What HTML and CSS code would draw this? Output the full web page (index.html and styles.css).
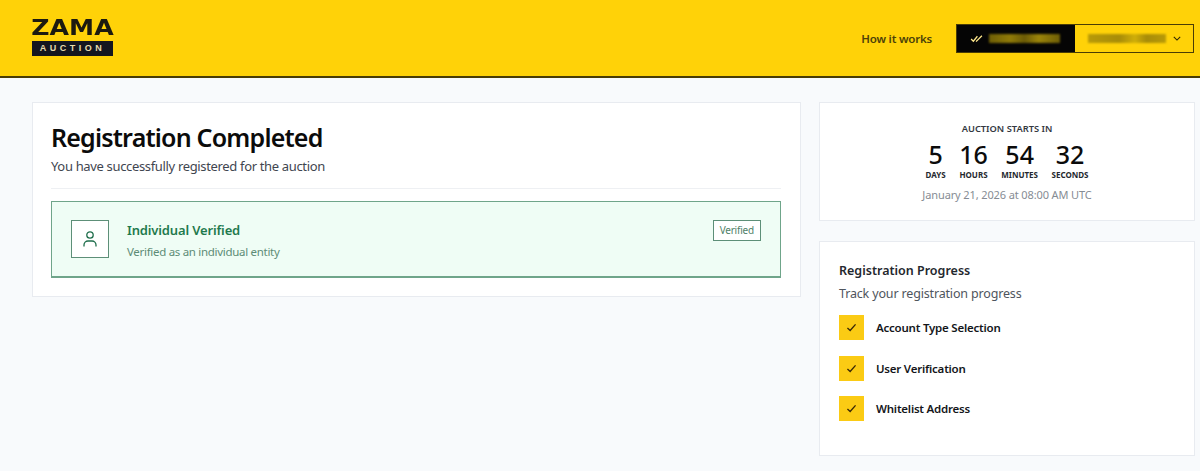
FILE: index.html
```html
<!DOCTYPE html>
<html lang="en">
<head>
  <meta charset="UTF-8" />
  <meta name="viewport" content="width=device-width, initial-scale=1.0" />
  <title>Zama Auction - Registration</title>
  <link rel="stylesheet" href="styles.css">
</head>
<body>
  <header class="topbar">
    <div class="logo">
      <div class="logo-name">ZAMA</div>
      <div class="logo-tag">AUCTION</div>
    </div>
    <nav class="topnav">
      <a class="nav-link" href="#">How it works</a>
      <div class="wallet">
        <div class="wallet-status">
          <svg class="double-check" viewBox="0 0 14 10" fill="none" stroke="currentColor" stroke-width="1.4">
            <path d="M1 5.5l2.5 2.5L8 2.5"/>
            <path d="M6.5 7.5l.5.5L13 2"/>
          </svg>
          <span class="blur-block blur-dark"></span>
        </div>
        <div class="wallet-account">
          <span class="blur-block blur-light"></span>
          <svg class="chevron" viewBox="0 0 10 6" fill="none" stroke="currentColor" stroke-width="1.3">
            <path d="M1 1l4 4 4-4"/>
          </svg>
        </div>
      </div>
    </nav>
  </header>

  <main class="page">
    <section class="card status-card">
      <h1>Registration Completed</h1>
      <p class="status-sub">You have successfully registered for the auction</p>
      <div class="verified-box">
        <div class="verified-icon">
          <svg viewBox="0 0 14 16" fill="none" stroke="currentColor" stroke-width="1.3">
            <circle cx="7" cy="4" r="3.2"/>
            <path d="M1 15.5v-1.5a4 4 0 0 1 4-4h4a4 4 0 0 1 4 4v1.5"/>
          </svg>
        </div>
        <div class="verified-text">
          <h3>Individual Verified</h3>
          <p>Verified as an individual entity</p>
        </div>
        <span class="verified-badge">Verified</span>
      </div>
    </section>

    <aside class="sidebar">
      <section class="card countdown-card">
        <div class="countdown-title">AUCTION STARTS IN</div>
        <div class="countdown">
          <div class="unit"><strong>5</strong><span>DAYS</span></div>
          <div class="unit"><strong>16</strong><span>HOURS</span></div>
          <div class="unit"><strong>54</strong><span>MINUTES</span></div>
          <div class="unit"><strong>32</strong><span>SECONDS</span></div>
        </div>
        <div class="countdown-date">January 21, 2026 at 08:00 AM UTC</div>
      </section>

      <section class="card progress-card">
        <h2>Registration Progress</h2>
        <p class="progress-sub">Track your registration progress</p>
        <ul class="steps">
          <li>
            <span class="step-check"><svg viewBox="0 0 12 10" fill="none" stroke="currentColor" stroke-width="1.5"><path d="M1.5 5.5l3 2.8L10.5 1.5"/></svg></span>
            Account Type Selection
          </li>
          <li>
            <span class="step-check"><svg viewBox="0 0 12 10" fill="none" stroke="currentColor" stroke-width="1.5"><path d="M1.5 5.5l3 2.8L10.5 1.5"/></svg></span>
            User Verification
          </li>
          <li>
            <span class="step-check"><svg viewBox="0 0 12 10" fill="none" stroke="currentColor" stroke-width="1.5"><path d="M1.5 5.5l3 2.8L10.5 1.5"/></svg></span>
            Whitelist Address
          </li>
        </ul>
      </section>
    </aside>
  </main>
</body>
</html>
```

FILE: styles.css
```css
:root {
  --yellow: #ffd208;
  --ink: #0b0b0b;
  --green: #1f7a4d;
  --green-line: #6fa58a;
  --line: #e8ebf0;
}

* {
  margin: 0;
  padding: 0;
  box-sizing: border-box;
  font-family: 'Noto Sans', sans-serif;
}

body {
  background-color: #f8fafc;
  color: var(--ink);
  overflow: hidden;
}

.topbar {
  height: 78px;
  background-color: var(--yellow);
  border-bottom: 2px solid #4a3d05;
  padding: 20px 6px 0 32px;
  display: flex;
  justify-content: space-between;
  align-items: flex-start;
}

.logo {
  width: 81px;
}

.logo-name {
  font-family: 'DejaVu Sans', sans-serif;
  font-size: 21px;
  line-height: 17px;
  font-weight: 700;
  color: #1c1a10;
  text-align: center;
  transform: scaleX(1.2);
}

.logo-tag {
  margin-top: 4px;
  height: 15px;
  background-color: #14161f;
  color: #e8dcae;
  font-family: 'Liberation Sans', sans-serif;
  font-size: 9px;
  line-height: 15px;
  font-weight: 700;
  letter-spacing: 3.5px;
  text-align: center;
}

.topnav {
  display: flex;
  align-items: center;
  gap: 24px;
  margin-top: 4px;
}

.nav-link {
  color: #4d4208;
  font-size: 11.5px;
  font-weight: 600;
  letter-spacing: -0.2px;
  text-decoration: none;
}

.wallet {
  width: 238px;
  height: 29px;
  display: flex;
  border: 1px solid #4a3d05;
}

.wallet-status {
  width: 118px;
  background-color: #050505;
  color: #ffe88c;
  display: flex;
  align-items: center;
  padding-left: 13px;
  gap: 6px;
}

.double-check {
  width: 13px;
  height: 9px;
}

.wallet-account {
  flex: 1;
  display: flex;
  align-items: center;
  padding-left: 13px;
  gap: 7px;
  color: #2b2505;
}

.blur-block {
  display: block;
  height: 9px;
  filter: blur(1.2px);
}

.blur-dark {
  width: 71px;
  background: linear-gradient(to right, #6e5e06, #8f7a08 30%, #6b5b06 50%, #9a840a 70%, #6e5e06);
}

.blur-light {
  width: 78px;
  background: linear-gradient(to right, #b89a08, #a88c08 40%, #d0ae08 60%, #a88c08 75%, #b89a08);
}

.chevron {
  width: 8px;
  height: 5px;
}

.page {
  display: flex;
  align-items: flex-start;
  gap: 18px;
  padding: 24px 5px 0 32px;
}

.card {
  background-color: #fff;
  border: 1px solid var(--line);
}

.status-card {
  width: 769px;
  height: 195px;
  padding: 18px 19px 0 18px;
}

.status-card h1 {
  font-size: 25px;
  line-height: 32px;
  font-weight: 600;
  letter-spacing: -0.8px;
}

.status-sub {
  margin-top: 4px;
  padding-bottom: 13px;
  border-bottom: 1px solid #eef0f3;
  color: #3f4650;
  font-size: 13px;
  line-height: 18px;
  letter-spacing: -0.34px;
}

.verified-box {
  margin-top: 12px;
  height: 77px;
  display: flex;
  align-items: flex-start;
  padding: 18px 19px 0;
  background-color: #effdf5;
  border: 1px solid var(--green-line);
  border-bottom-width: 2px;
}

.verified-icon {
  width: 38px;
  height: 38px;
  display: flex;
  align-items: center;
  justify-content: center;
  background-color: #fff;
  border: 1px solid #5d8f78;
  color: #1f6e4c;
}

.verified-icon svg {
  width: 14px;
  height: 16px;
}

.verified-text {
  flex: 1;
  margin-left: 18px;
  padding-top: 1px;
}

.verified-text h3 {
  color: var(--green);
  font-size: 13px;
  line-height: 18px;
  font-weight: 600;
  letter-spacing: -0.15px;
}

.verified-text p {
  margin-top: 5px;
  color: #5d8c76;
  font-size: 11.5px;
  line-height: 16px;
  letter-spacing: -0.3px;
}

.verified-badge {
  background-color: #fff;
  border: 1px solid #5d8f78;
  color: #4f7f69;
  font-size: 10px;
  line-height: 19px;
  letter-spacing: -0.2px;
  padding: 0 6px;
}

.sidebar {
  width: 376px;
  display: flex;
  flex-direction: column;
  gap: 20px;
}

.countdown-card {
  height: 119px;
  padding-top: 20px;
  text-align: center;
}

.countdown-title {
  color: #33383f;
  font-size: 9.3px;
  line-height: 12px;
  font-weight: 600;
}

.countdown {
  display: flex;
  justify-content: center;
  gap: 13.5px;
  margin-top: 5px;
}

.unit {
  display: flex;
  flex-direction: column;
  align-items: center;
  min-width: 19px;
}

.unit strong {
  font-size: 25px;
  line-height: 28px;
  font-weight: 500;
}

.unit span {
  margin-top: 2px;
  font-size: 8px;
  line-height: 10px;
  font-weight: 700;
  color: #24282e;
}

.countdown-date {
  margin-top: 7px;
  color: #868c94;
  font-size: 11px;
  line-height: 16px;
  letter-spacing: -0.12px;
}

.progress-card {
  height: 215px;
  padding: 20px 19px 0;
}

.progress-card h2 {
  color: #24282e;
  font-size: 12.5px;
  line-height: 18px;
  font-weight: 600;
}

.progress-sub {
  margin-top: 5px;
  color: #4f555d;
  font-size: 12.5px;
  line-height: 18px;
  letter-spacing: -0.16px;
}

.steps {
  list-style: none;
  margin-top: 12px;
  display: flex;
  flex-direction: column;
  gap: 15.6px;
}

.steps li {
  display: flex;
  align-items: center;
  gap: 12px;
  font-size: 11.5px;
  font-weight: 600;
  letter-spacing: -0.22px;
  color: #14161a;
}

.step-check {
  width: 25px;
  height: 25px;
  display: flex;
  align-items: center;
  justify-content: center;
  background-color: #fbcb14;
  color: #3a2806;
}

.step-check svg {
  width: 11px;
  height: 9px;
}
```
